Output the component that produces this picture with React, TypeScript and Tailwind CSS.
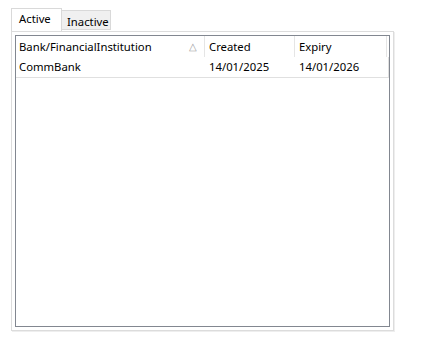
import React from 'react';

const rows = [{ bank: 'CommBank', created: '14/01/2025', expiry: '14/01/2026' }];

export default function App() {
  return (
    <div
      className="w-[437px] h-[341px] bg-white text-[11.3px] text-black"
      style={{ fontFamily: '"Noto Sans", "Open Sans", sans-serif' }}
    >
      <div className="pt-[9px] pl-[11px]">
        {/* Tabs */}
        <div className="flex items-end h-[22px] relative z-10">
          <div className="h-[23px] w-[51px] border border-b-0 border-[#d9d9d9] bg-white pl-[7px] leading-[20px]">
            Active
          </div>
          <div className="h-[20px] w-[49px] border border-l-0 border-[#d9d9d9] bg-[#f0f0f0] pl-[5px] leading-[21px] mb-[1px]">
            Inactive
          </div>
        </div>

        {/* Panel */}
        <div className="w-[383px] h-[300px] border border-[#dcdcdc] bg-white p-[3px] shadow-[1px_1px_0_#eeeeee]">
          <div className="h-full border border-[#828790] bg-white">
            <div className="flex h-[21px] items-center">
              <div className="relative w-[189px] h-full pl-[3px] leading-[21px] border-r border-[#e5e5e5]">
                Bank/FinancialInstitution
                <span className="absolute right-[7px] top-[0px] text-[10px] text-[#a0a0a0]">△</span>
              </div>
              <div className="w-[90px] h-full pl-[4px] leading-[21px] border-r border-[#e5e5e5]">Created</div>
              <div className="w-[92px] h-full pl-[4px] leading-[21px] border-r border-[#e5e5e5]">Expiry</div>
            </div>
            {rows.map((r) => (
              <div key={r.bank} className="flex h-[21px] border-b border-[#e0e0e0] w-[373px]">
                <div className="w-[189px] pl-[3px] leading-[20px]">{r.bank}</div>
                <div className="w-[90px] pl-[4px] leading-[20px]">{r.created}</div>
                <div className="w-[94px] pl-[4px] leading-[20px] border-r border-[#e0e0e0]">{r.expiry}</div>
              </div>
            ))}
          </div>
        </div>
      </div>
    </div>
  );
}
